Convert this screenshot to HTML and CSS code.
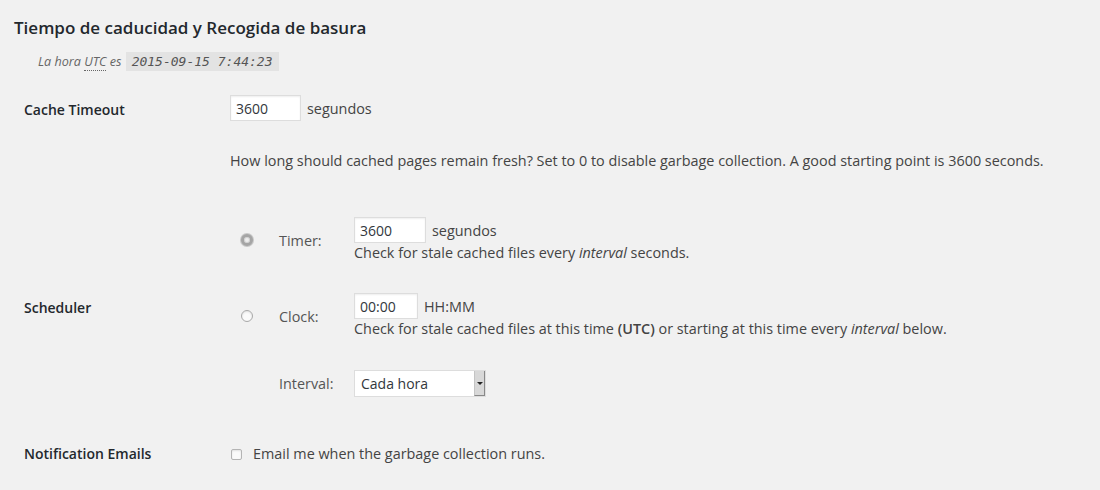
FILE: index.html
```html
<!DOCTYPE html>
<html lang="es">
<head>
    <meta charset="UTF-8">
    <meta name="viewport" content="width=device-width, initial-scale=1.0">
    <link rel="stylesheet" href="styles.css">
    <title>Tiempo de caducidad y Recogida de basura</title>
</head>
<body>
    <div class="wrap">
        <h3 class="title">Tiempo de caducidad y Recogida de basura</h3>
        <p class="utc">La hora <abbr title="Coordinated Universal Time">UTC</abbr> es <code>2015-09-15 7:44:23</code></p>

        <div class="row row-timeout">
            <div class="label">Cache Timeout</div>
            <div class="field">
                <div class="line"><input class="text w-timeout" type="text" value="3600"> segundos</div>
                <p class="description">How long should cached pages remain fresh? Set to 0 to disable garbage collection. A good starting point is 3600 seconds.</p>
            </div>
        </div>

        <div class="row row-scheduler">
            <div class="label">Scheduler</div>
            <div class="field">
                <div class="sched">
                    <div class="sched-row">
                        <span class="radio checked"></span>
                        <span class="sched-label">Timer:</span>
                        <div class="sched-field">
                            <div class="line"><input class="text w-timer" type="text" value="3600"> segundos</div>
                            <div class="hint">Check for stale cached files every <em>interval</em> seconds.</div>
                        </div>
                    </div>
                    <div class="sched-row">
                        <span class="radio"></span>
                        <span class="sched-label">Clock:</span>
                        <div class="sched-field">
                            <div class="line"><input class="text w-clock" type="text" value="00:00"> HH:MM</div>
                            <div class="hint">Check for stale cached files at this time <b>(UTC)</b> or starting at this time every <em>interval</em> below.</div>
                        </div>
                    </div>
                    <div class="sched-row">
                        <span class="radio-gap"></span>
                        <span class="sched-label">Interval:</span>
                        <div class="sched-field">
                            <div class="select">Cada hora<span class="select-btn"><span class="arrow"></span></span></div>
                        </div>
                    </div>
                </div>
            </div>
        </div>

        <div class="row row-notify">
            <div class="label">Notification Emails</div>
            <div class="field">
                <label class="check-line"><span class="checkbox"></span>Email me when the garbage collection runs.</label>
            </div>
        </div>
    </div>
</body>
</html>
```

FILE: styles.css
```css
body{
    margin: 0;
    background: #f1f1f1;
    color: #444;
    font-family: 'Open Sans', sans-serif;
    font-size: 13px;
}

.wrap{
    padding: 0 14px;
}

.title{
    margin: 0;
    padding-top: 17px;
    font-size: 17px;
    font-weight: 600;
    color: #23282d;
    line-height: 22px;
}

.utc{
    margin: 13px 0 0 24px;
    font-size: 12.6px;
    font-style: italic;
    color: #666;
    line-height: 19px;
}

.utc abbr{
    text-decoration: none;
    border-bottom: 1px dotted #666;
}

.utc code{
    display: inline-block;
    margin-left: 1px;
    padding: 0 6px;
    background: #e3e3e3;
    color: #555;
    font-family: 'DejaVu Sans Mono', monospace;
    font-size: 13px;
    font-style: italic;
    line-height: 19px;
}

.row{
    display: flex;
    align-items: flex-start;
    padding-left: 10px;
}

.row-timeout{
    margin-top: 24px;
}

.label{
    width: 206px;
    flex: none;
    font-size: 14px;
    font-weight: 600;
    color: #23282d;
}

.row-timeout .label{
    padding-top: 5px;
}

.field{
    font-size: 14.4px;
}

.line{
    display: flex;
    align-items: center;
    gap: 6px;
}

.text{
    box-sizing: border-box;
    height: 26px;
    padding: 3px 5px;
    border: 1px solid #ddd;
    box-shadow: inset 0 1px 2px rgba(0, 0, 0, 0.07);
    background: #fff;
    color: #32373c;
    font-family: 'Open Sans', sans-serif;
    font-size: 14px;
    outline: none;
}

.w-timeout{ width: 71px; }
.w-timer{ width: 72px; }
.w-clock{ width: 64px; }

.description{
    margin: 30px 0 0;
    line-height: 20px;
}

.row-scheduler{
    align-items: center;
    margin-top: 31px;
}

.sched-row{
    display: flex;
    align-items: center;
    padding: 15px 0;
}

.sched-row:last-child{
    padding-top: 16px;
}

.radio, .radio-gap{
    width: 12px;
    height: 12px;
    margin-left: 11px;
    flex: none;
}

.radio{
    box-sizing: border-box;
    border: 1px solid #a8a8a8;
    border-radius: 50%;
    background: #fafafa;
    box-shadow: inset 0 1px 2px rgba(0, 0, 0, 0.1);
}

.radio.checked{
    border: 3px solid #a5a5a5;
    background: #eee;
    box-shadow: inset 0 0 0 1px #d4d4d4, 0 0 0 1px #c8c8c8;
}

.sched-label{
    width: 75px;
    margin-left: 26px;
    flex: none;
    font-size: 14.4px;
    color: #555;
}

.hint{
    line-height: 20px;
}

.hint b{
    font-weight: 600;
}

.select{
    box-sizing: border-box;
    position: relative;
    width: 132px;
    height: 27px;
    padding: 3px 6px;
    border: 1px solid #ddd;
    background: #fff;
    font-size: 14px;
    line-height: 19px;
    color: #32373c;
}

.select-btn{
    position: absolute;
    top: 0;
    right: 0;
    bottom: 0;
    width: 11px;
    background: #d8d8d8;
    border-left: 1px solid #c4c4c4;
    border-right: 1px solid #888;
    border-bottom: 1px solid #888;
    box-sizing: border-box;
}

.arrow{
    position: absolute;
    top: 11px;
    left: 2px;
    width: 0;
    height: 0;
    border-left: 3px solid transparent;
    border-right: 3px solid transparent;
    border-top: 3px solid #222;
}

.row-notify{
    margin-top: 32px;
    align-items: center;
    line-height: 20px;
}

.check-line{
    display: flex;
    align-items: center;
    gap: 11px;
    padding-left: 1px;
}

.checkbox{
    box-sizing: border-box;
    width: 11px;
    height: 11px;
    border: 1px solid #b4b4b4;
    border-radius: 2px;
    background: #fafafa;
    box-shadow: inset 0 1px 2px rgba(0, 0, 0, 0.1);
}
```
